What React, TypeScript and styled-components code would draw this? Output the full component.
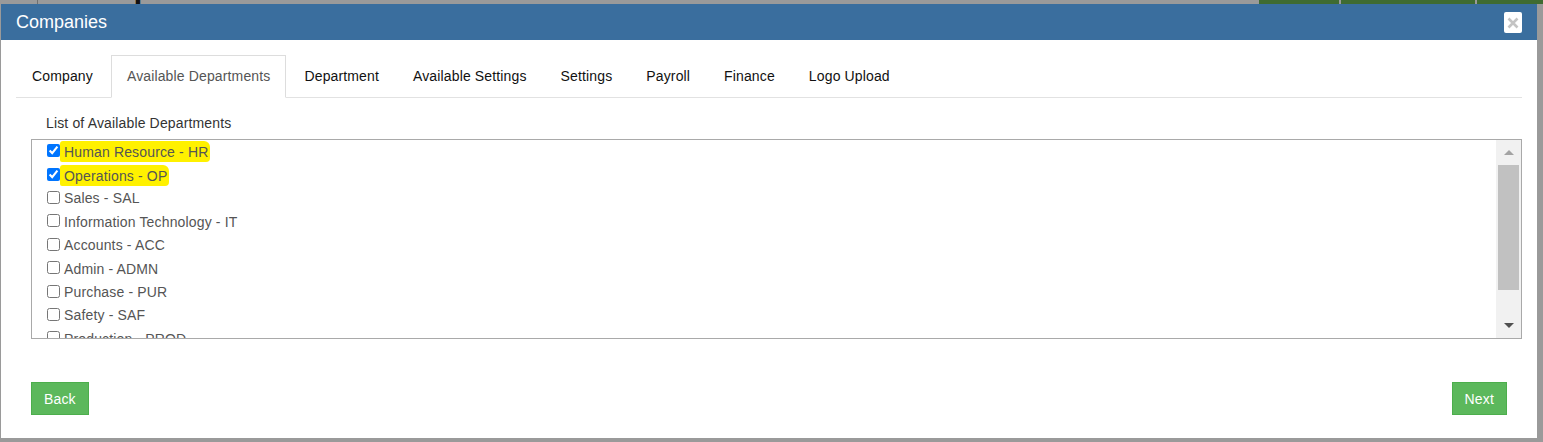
import * as React from 'react';
import styled, { createGlobalStyle } from 'styled-components';

const GlobalStyle = createGlobalStyle`
  html, body {
    margin: 0;
    padding: 0;
    background: #9a9a9a;
    font-family: "Liberation Sans", Arial, sans-serif;
    font-size: 14px;
    color: #333;
    letter-spacing: 0.15px;
  }
  * { box-sizing: border-box; }
`;

const Screen = styled.div`
  position: relative;
  width: 1543px;
  height: 442px;
  overflow: hidden;
  background: #9a9a9a;
`;

// dimmed page that sits behind the modal
const PageBehind = styled.div`
  display: flex;
  align-items: flex-end;
  height: 4px;
  overflow: visible;
`;

const PageRail = styled.div`
  width: 38px;
  height: 442px;
  border-right: 1px solid #6f6f6f;
`;

const PageTitle = styled.h1`
  margin: -27px 0 0 24px;
  font-size: 32px;
  font-weight: bold;
  color: #111;
  line-height: 30px;
  flex: 1;
`;

const PageActions = styled.div`
  display: flex;
  gap: 2px;
  align-self: flex-start;
`;

const PageAction = styled.div<{ $w: number }>`
  width: ${p => p.$w}px;
  height: 4px;
  background: #3f6b31;
`;

const Modal = styled.div`
  position: absolute;
  top: 4px;
  left: 1px;
  width: 1536px;
  height: 434px;
  background: #fff;
  display: flex;
  flex-direction: column;
`;

const Header = styled.div`
  height: 36px;
  background: #3a6e9e;
  display: flex;
  align-items: center;
  justify-content: space-between;
  padding: 0 15px 0 15px;
`;

const Title = styled.div`
  color: #fff;
  font-size: 18px;
  line-height: 20px;
  margin-top: -1px;
  letter-spacing: 0;
`;

const CloseButton = styled.button`
  width: 18px;
  height: 21px;
  margin-top: 1px;
  border: none;
  border-radius: 2px;
  background: #fff;
  padding: 0;
  display: flex;
  align-items: center;
  justify-content: center;
`;

const Body = styled.div`
  padding: 15px 15px 0 15px;
  flex: 1;
`;

const TabBar = styled.ul`
  display: flex;
  list-style: none;
  margin: 0;
  padding: 0;
  border-bottom: 1px solid #e2e2e2;
`;

const Tab = styled.li<{ $active?: boolean }>`
  height: 43px;
  margin-right: 2px;
  margin-bottom: -1px;
  padding: 0 15px 2px;
  display: flex;
  align-items: center;
  color: ${p => (p.$active ? '#555' : '#111')};
  border: 1px solid ${p => (p.$active ? '#ddd' : 'transparent')};
  border-bottom: ${p => (p.$active ? '1px solid #fff' : 'none')};
  background: ${p => (p.$active ? '#fff' : 'transparent')};
  letter-spacing: 0.14px;
`;

const Pane = styled.div`
  padding: 17px 0 0 15px;
`;

const Label = styled.div`
  padding-left: 15px;
  line-height: 17px;
  color: #333;
  margin-bottom: 7px;
`;

const ListBox = styled.div`
  height: 200px;
  border: 1px solid #a9a9a9;
  display: flex;
`;

const Items = styled.div`
  flex: 1;
  overflow: hidden;
  padding-left: 15px;
`;

const Item = styled.label`
  display: flex;
  align-items: center;
  height: 23.4px;
  color: #555;
`;

const Check = styled.input`
  margin: 0 4px 0 0;
  width: 13px;
  height: 13px;
  position: relative;
  top: -1px;
`;

const ItemText = styled.span<{ $marked?: boolean }>`
  ${p =>
    p.$marked
      ? `
    background: #fff100;
    margin-left: -4px;
    padding: 3px 2px 2px 4px;
    border-radius: 3px 6px 4px 2px;
  `
      : ''}
`;

const ScrollBar = styled.div`
  width: 25px;
  background: #f1f1f1;
  display: flex;
  flex-direction: column;
`;

const ScrollArrow = styled.div<{ $down?: boolean }>`
  height: 25px;
  display: flex;
  align-items: center;
  justify-content: center;
  &::after {
    content: '';
    border-left: 5px solid transparent;
    border-right: 5px solid transparent;
    ${p =>
      p.$down
        ? 'border-top: 5px solid #505050;'
        : 'border-bottom: 5px solid #a3a3a3;'}
  }
`;

const ScrollTrack = styled.div`
  flex: 1;
  padding: 0 2px;
`;

const ScrollThumb = styled.div`
  height: 125px;
  background: #c1c1c1;
`;

const Footer = styled.div`
  display: flex;
  justify-content: space-between;
  padding: 0 30px 23px 30px;
`;

const GreenButton = styled.button`
  height: 33px;
  padding: 0 12px;
  background: #5cb85c;
  border: 1px solid #4cae4c;
  color: #fff;
  font-family: "Liberation Sans", Arial, sans-serif;
  font-size: 14px;
  letter-spacing: 0.15px;
  border-radius: 0;
`;

const tabs = [
  'Company',
  'Available Departments',
  'Department',
  'Available Settings',
  'Settings',
  'Payroll',
  'Finance',
  'Logo Upload',
];

const departments = [
  { name: 'Human Resource - HR', checked: true },
  { name: 'Operations - OP', checked: true },
  { name: 'Sales - SAL', checked: false },
  { name: 'Information Technology - IT', checked: false },
  { name: 'Accounts - ACC', checked: false },
  { name: 'Admin - ADMN', checked: false },
  { name: 'Purchase - PUR', checked: false },
  { name: 'Safety - SAF', checked: false },
  { name: 'Production - PROD', checked: false },
];

export default function App() {
  return (
    <>
      <GlobalStyle />
      <Screen>
        <PageBehind>
          <PageRail />
          <PageTitle>Companies</PageTitle>
          <PageActions>
            <PageAction $w={80} />
            <PageAction $w={134} />
            <PageAction $w={66} />
          </PageActions>
        </PageBehind>

        <Modal>
          <Header>
            <Title>Companies</Title>
            <CloseButton aria-label="Close">
              <svg width="12" height="12" viewBox="0 0 12 12">
                <path d="M1.5 1.5 L10.5 10.5 M10.5 1.5 L1.5 10.5" stroke="#c4c4c4" strokeWidth="2.6" />
              </svg>
            </CloseButton>
          </Header>

          <Body>
            <TabBar>
              {tabs.map((t, i) => (
                <Tab key={t} $active={i === 1}>
                  {t}
                </Tab>
              ))}
            </TabBar>

            <Pane>
              <Label>List of Available Departments</Label>
              <ListBox>
                <Items>
                  {departments.map(d => (
                    <Item key={d.name}>
                      <Check type="checkbox" defaultChecked={d.checked} />
                      <ItemText $marked={d.checked}>{d.name}</ItemText>
                    </Item>
                  ))}
                </Items>
                <ScrollBar>
                  <ScrollArrow />
                  <ScrollTrack>
                    <ScrollThumb />
                  </ScrollTrack>
                  <ScrollArrow $down />
                </ScrollBar>
              </ListBox>
            </Pane>
          </Body>

          <Footer>
            <GreenButton>Back</GreenButton>
            <GreenButton>Next</GreenButton>
          </Footer>
        </Modal>
      </Screen>
    </>
  );
}
